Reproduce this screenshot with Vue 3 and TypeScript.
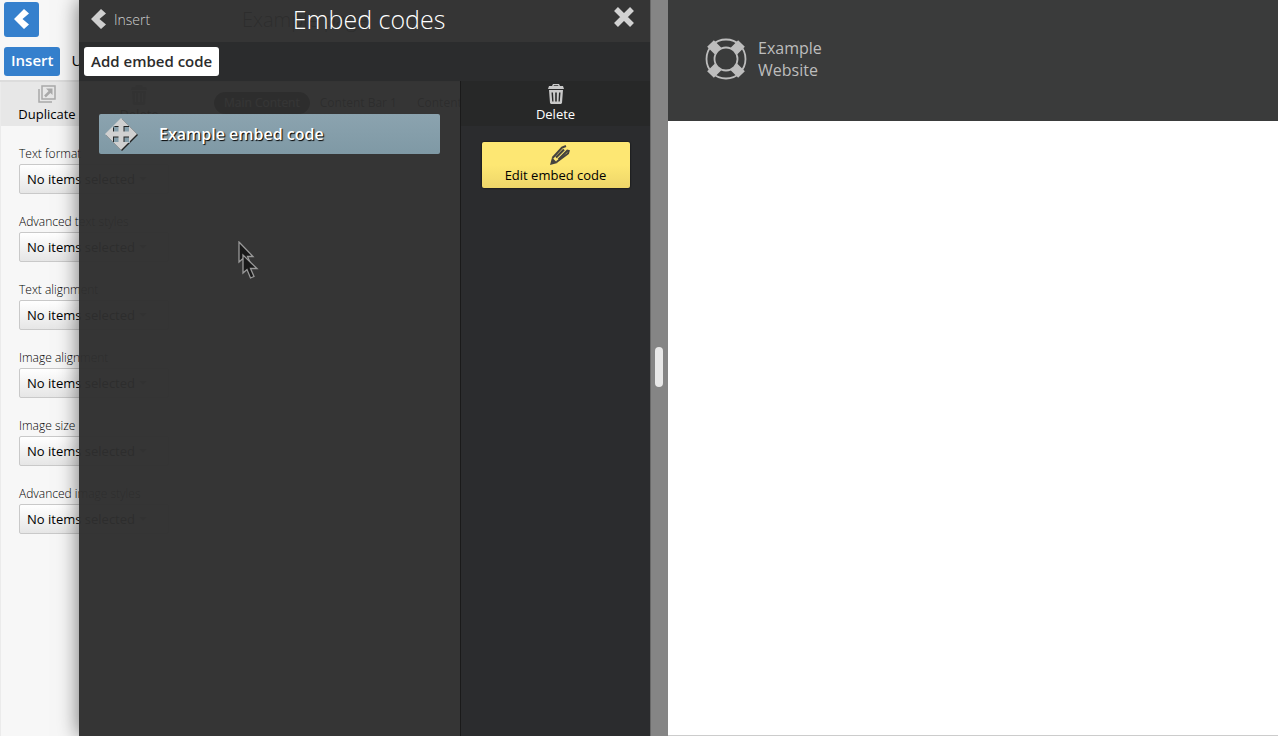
<script setup lang="ts">
interface Field {
  id: string
  label: string
}

const fields: Field[] = [
  { id: 'text-format', label: 'Text format' },
  { id: 'text-styles', label: 'Advanced text styles' },
  { id: 'text-align', label: 'Text alignment' },
  { id: 'image-align', label: 'Image alignment' },
  { id: 'image-size', label: 'Image size' },
  { id: 'image-styles', label: 'Advanced image styles' },
]

const regions: string[] = ['Main Content', 'Content Bar 1', 'Content Bar 2']
</script>

<template>
  <div class="app">
    <section class="workspace">
      <div class="editor">
        <header class="editor-head">
          <button class="back-btn" type="button" aria-label="Back">
            <svg viewBox="0 0 16 20" width="16" height="20"><path d="M10 0 15 4.500 8.500 10l6.500 5.500-5 4.500L0 10z" fill="#fff" /></svg>
          </button>
          <h2 class="page-name">Example page</h2>
        </header>
        <nav class="editor-tabs">
          <button class="tab active" type="button">Insert</button>
          <button class="tab" type="button">Undo</button>
        </nav>
        <div class="editor-body">
          <aside class="props">
            <div class="tools">
              <button class="tool" type="button">
                <svg viewBox="0 0 18 18" width="18" height="18" fill="none" stroke="#a9a9a9" stroke-width="1.500">
                  <path d="M4 1h13v13H4zM1 4v13h13" />
                  <path d="M7 11.500 12.500 6" stroke-width="2.500" />
                  <path d="M8 3.500h6.500V10z" fill="#a9a9a9" stroke="none" />
                </svg>
                <span>Duplicate</span>
              </button>
              <button class="tool" type="button">
                <svg viewBox="0 0 16 20" width="16" height="20" fill="#999">
                  <path fill-rule="evenodd" d="M5 0h6l1 2h3l1 3H0l1-3h3zM1 6h14l-1 13-1 1H3l-1-1zM4 8v9h1V8zM7 8v9h2V8zM11 8v9h1V8z" />
                </svg>
                <span>Delete</span>
              </button>
            </div>
            <form class="fields">
              <div v-for="f in fields" :key="f.id" class="field">
                <label :for="f.id">{{ f.label }}</label>
                <div class="select-wrap">
                  <select :id="f.id">
                    <option>No items selected</option>
                  </select>
                  <svg class="caret" viewBox="0 0 8 4" width="8" height="4"><path d="M0 0h8L4 4z" fill="#aaa" /></svg>
                </div>
              </div>
            </form>
          </aside>
          <div class="regions">
            <button v-for="(r, i) in regions" :key="r" class="region" :class="{ current: i === 0 }" type="button">{{ r }}</button>
          </div>
        </div>
      </div>

      <div class="panel">
        <header class="panel-head">
          <a class="crumb" href="#">
            <svg viewBox="0 0 16 20" width="16" height="20"><path d="M10 0 15 4.500 8.500 10l6.500 5.500-5 4.500L0 10z" fill="#cfcfcf" /></svg>
            <span>Insert</span>
          </a>
          <h1>Embed codes</h1>
          <button class="close" type="button" aria-label="Close">
            <svg viewBox="0 0 22 22" width="22" height="22"><path d="M3 3l16 16M19 3 3 19" stroke="#d2d2d2" stroke-width="5.500" /></svg>
          </button>
        </header>
        <div class="panel-tabs">
          <button class="add" type="button">Add embed code</button>
        </div>
        <div class="panel-body">
          <main class="list">
            <button class="item" type="button">
              <svg class="move" viewBox="0 0 32 32" width="32" height="32">
                <path d="M16 0 24 8H18.500V13.500H24V8L32 16 24 24V18.500H18.500V24H24L16 32 8 24H13.500V18.500H8V24L0 16 8 8V13.500H13.500V8H8z" fill="#d0d0d0" />
              </svg>
              <span>Example embed code</span>
            </button>
          </main>
          <aside class="actions">
            <button class="delete" type="button">
              <svg viewBox="0 0 16 20" width="16" height="20" fill="#c9c9c9">
                <path fill-rule="evenodd" d="M5 0h6l1 2h3l1 3H0l1-3h3zM6 1.200 5.500 2h5L10 1.200zM1 6h14l-1 13-1 1H3l-1-1zM3.500 8.500l.7 9h1.300l-.5-9zM7.200 8.500v9h1.600v-9zM11 8.500l-.5 9h1.300l.7-9z" />
              </svg>
              <span>Delete</span>
            </button>
            <button class="edit" type="button">
              <svg viewBox="0 0 28 20" width="28" height="20" fill="none" stroke="#45433f" stroke-width="2">
                <path d="M8 20 10 12.500 15.500 18z" fill="#45433f" stroke="none" />
                <path d="M10.500 13 20 2.500 24 1M14.500 17 26 8.500 27 5" />
                <path d="M14 12.500 22 4.500M16.500 14.500 26 5" stroke-width="2.200" />
              </svg>
              <span>Edit embed code</span>
            </button>
          </aside>
        </div>
      </div>

      <svg class="pointer" viewBox="0 0 22 40" width="22" height="40" fill="#191919" stroke="#999" stroke-width="1.300">
        <path d="M1 1v20l4.500-4 3 7 4-1.500-3-7H15z" />
        <path d="M5 14v18l4-3.500 3.500 8.500 3.500-1.500-3.500-8H19z" />
      </svg>
    </section>

    <div class="splitter" role="separator" aria-orientation="vertical"><span class="grip"></span></div>

    <section class="preview">
      <header class="site-head">
        <svg viewBox="0 0 42 42" width="42" height="42" fill="none" stroke="#bdbdbd">
          <circle cx="21" cy="21" r="19.500" stroke-width="1.800" />
          <circle cx="21" cy="21" r="11.500" stroke-width="1.800" />
          <path d="M13 13 5.500 5.500M29 13l7.500-7.500M13 29l-7.500 7.500M29 29l7.500 7.500" stroke-width="9.500" />
        </svg>
        <div class="site-name">Example<br />Website</div>
      </header>
    </section>
  </div>
</template>

<style>
html,
body {
  margin: 0;
}
</style>

<style scoped>
.app {
  display: flex;
  height: 100vh;
  overflow: hidden;
  background: #fff;
  font-family: "Open Sans", "Noto Sans", sans-serif;
  font-size: 13px;
  color: #000;
}
.app * {
  box-sizing: border-box;
}
button,
select {
  font: inherit;
  color: inherit;
  margin: 0;
  padding: 0;
  border: 0;
  background: none;
}
svg {
  display: block;
  flex: none;
}
.workspace {
  position: relative;
  flex: 650 1 0;
  min-width: 0;
  overflow: hidden;
}
.editor {
  display: flex;
  flex-direction: column;
  height: 100%;
  background: #fff;
}
.editor-head {
  display: flex;
  align-items: center;
  height: 42px;
  padding: 0 4px 4px;
  background: #f7f7f7;
}
.back-btn {
  display: grid;
  place-items: center;
  width: 35px;
  height: 35px;
  border-radius: 3px;
  background: #3580cd;
}
.page-name {
  flex: 1;
  margin: 0;
  padding-left: 203px;
  font-size: 20px;
  font-weight: 300;
}
.editor-tabs {
  display: flex;
  align-items: center;
  gap: 4px;
  height: 40px;
  padding: 0 4px;
  background: #f7f7f7;
  border-bottom: 2px solid #dcdcdc;
}
.tab,
.add {
  height: 29px;
  padding: 0 7px 2px;
  border-radius: 3px;
  font-size: 15px;
}
.tab.active {
  background: #3580cd;
  color: #fff;
  font-weight: 600;
}
.editor-body {
  display: flex;
  flex: 1;
}
.props {
  width: 189px;
  background: #f7f7f7;
  border-left: 1px solid #ebebeb;
}
.tools {
  display: flex;
  height: 44px;
  padding-right: 4px;
  background: #e7e7e7;
}
.tool,
.delete {
  display: flex;
  flex-direction: column;
  align-items: center;
  justify-content: space-between;
  padding: 3px 0;
  line-height: 18px;
}
.tool {
  flex: 1;
}
.fields {
  padding: 18px;
}
.field {
  height: 68px;
}
.field label {
  display: block;
  height: 20px;
  line-height: 19px;
  font-size: 12px;
  font-weight: 300;
}
.select-wrap {
  position: relative;
  width: 150px;
}
.select-wrap select {
  width: 100%;
  height: 30px;
  padding: 0 7px;
  appearance: none;
  border: 1px solid #c9c9c9;
  border-radius: 2px;
  background: linear-gradient(#fff, #e6e6e6);
}
.caret {
  position: absolute;
  right: 22px;
  top: 13px;
}
.regions {
  display: flex;
  align-items: flex-start;
  padding: 10px 25px;
  flex: 1;
  overflow: hidden;
}
.region {
  flex: none;
  height: 22px;
  padding: 0 10px 2px;
  border-radius: 11px;
  font-size: 12px;
}
.region.current {
  background: #111;
  color: #fff;
}

.panel {
  position: absolute;
  inset: 0 0 0 79px;
  display: flex;
  flex-direction: column;
  background: rgba(46, 46, 46, 0.97);
  box-shadow: 0 0 20px rgba(0, 0, 0, 0.55);
  color: #fff;
}
.panel-head {
  display: grid;
  grid-template-columns: 120px 1fr 108px;
  align-items: center;
  height: 42px;
  padding: 0 15px 4px 12px;
}
.crumb {
  display: flex;
  align-items: center;
  gap: 7px;
  color: #cfcfcf;
  font-size: 14px;
  font-weight: 300;
  text-decoration: none;
}
h1 {
  margin: 0;
  font-size: 25px;
  line-height: 38px;
  font-weight: 300;
  text-align: center;
}
.close {
  justify-self: end;
  padding-bottom: 4px;
}
.panel-tabs {
  display: flex;
  align-items: center;
  height: 39px;
  padding: 0 5px;
  background: #2b2c2d;
}
.add {
  background: #fff;
  color: #2c2c2c;
  font-weight: 600;
}
.panel-body {
  display: flex;
  flex: 1;
}
.list {
  flex: 1;
  padding: 33px 20px;
}
.item {
  display: flex;
  align-items: center;
  gap: 22px;
  width: 100%;
  height: 40px;
  padding: 0 6px;
  border-radius: 2px;
  background: linear-gradient(#8ba3af, #7f99a5);
  color: #fff;
  font-size: 16px;
  font-weight: 600;
  text-shadow: 1px 1px 1px #000;
}
.move {
  filter: drop-shadow(1px 1px 0 #222);
}
.actions {
  width: 190px;
  border-left: 1px solid #1a1a1a;
  background: #2b2c2e;
}
.delete {
  width: 100%;
  height: 45px;
  background: #272828;
}
.edit {
  display: flex;
  flex-direction: column;
  align-items: center;
  justify-content: space-between;
  width: 148px;
  height: 46px;
  margin: 16px auto 0;
  padding: 3px 0 4px;
  border-radius: 2px;
  background: linear-gradient(#fde773 50%, #eed669);
  box-shadow: 0 0 2px #000;
  color: #000;
  line-height: 18px;
}
.pointer {
  position: absolute;
  left: 238px;
  top: 241px;
}
.splitter {
  display: grid;
  place-items: center;
  width: 18px;
  padding-bottom: 3px;
  background: #858585;
  box-shadow: inset 1px 0 #686868;
}
.grip {
  width: 8px;
  height: 40px;
  border-radius: 4px;
  background: #e8e8e8;
}
.preview {
  flex: 610 1 0;
  min-width: 0;
  border-bottom: 1px solid #ccc;
}
.site-head {
  display: flex;
  align-items: center;
  gap: 11px;
  height: 121px;
  padding: 0 37px 3px;
  background: #3a3b3b;
}
.site-name {
  color: #bdbdbd;
  font-size: 16px;
  line-height: 22px;
}
</style>
